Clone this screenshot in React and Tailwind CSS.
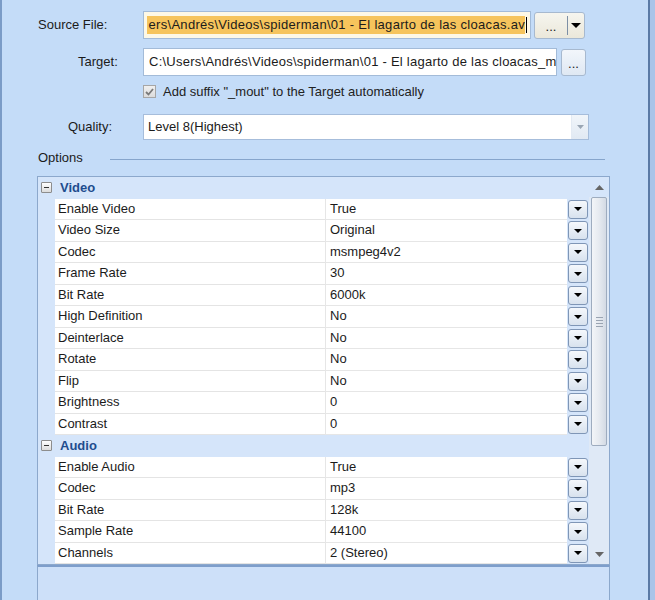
import React from "react";

const Tri = ({ c = "#000", w = 8, h = 4 }) => (
  <svg width={w} height={h} viewBox={`0 0 ${w} ${h}`} className="block">
    <path d={`M0 0H${w}L${w / 2} ${h}Z`} fill={c} />
  </svg>
);
const TriUp = ({ c = "#666", w = 9, h = 5 }) => (
  <svg width={w} height={h} viewBox={`0 0 ${w} ${h}`} className="block">
    <path d={`M0 ${h}H${w}L${w / 2} 0Z`} fill={c} />
  </svg>
);

const video = [
  ["Enable Video", "True"],
  ["Video Size", "Original"],
  ["Codec", "msmpeg4v2"],
  ["Frame Rate", "30"],
  ["Bit Rate", "6000k"],
  ["High Definition", "No"],
  ["Deinterlace", "No"],
  ["Rotate", "No"],
  ["Flip", "No"],
  ["Brightness", "0"],
  ["Contrast", "0"],
];
const audio = [
  ["Enable Audio", "True"],
  ["Codec", "mp3"],
  ["Bit Rate", "128k"],
  ["Sample Rate", "44100"],
  ["Channels", "2 (Stereo)"],
];

function Category({ name }) {
  return (
    <div className="flex items-center h-[21.5px] bg-[#d5e5fa]">
      <div className="w-[17px] flex items-center justify-center">
        <div className="w-[11px] h-[11px] border border-[#8d8d8d] bg-gradient-to-b from-white to-[#dcdcdc] flex items-center justify-center rounded-[1px]">
          <div className="w-[5px] h-px bg-[#333]" />
        </div>
      </div>
      <div className="pl-[5px] font-bold text-[#1f4d8e]">{name}</div>
    </div>
  );
}

function Row({ name, value }) {
  return (
    <div className="flex h-[21.5px] bg-[#d5e5fa]">
      <div className="w-[17px]" />
      <div className="w-[270px] bg-white border-b border-[#e4e4e4] pl-[3px] leading-[20.5px] whitespace-nowrap">
        {name}
      </div>
      <div className="flex-1 bg-white border-b border-l border-[#e6e6e6] pl-[4px] leading-[20.5px] whitespace-nowrap">
        {value}
      </div>
      <div className="w-[22px] flex items-center pl-[1px]">
        <div className="w-[20px] h-[19px] rounded-[3px] border border-[#7f96b6] bg-gradient-to-b from-[#f5f8fc] to-[#d8e2ee] flex items-center justify-center">
          <Tri w={8} h={4} />
        </div>
      </div>
    </div>
  );
}

export default function App() {
  return (
    <div className="flex w-[655px] h-[600px] overflow-hidden bg-[#c4dcf8] font-['Liberation_Sans',Arial,sans-serif] text-[13px] text-[#1b1b1b]">
      <div className="w-[2px] bg-[#7b9cc7]" />
      <div className="flex-1 flex flex-col">
        {/* Source File */}
        <div className="mt-[11px] h-[28px] flex items-center">
          <div className="w-[141px] pl-[36px]">Source File:</div>
          <div className="w-[388px] h-[28px] border border-[#a3bbd8] bg-[#fdf8e6] flex items-center overflow-hidden px-[3px]">
            <div className="flex-1 flex justify-end overflow-hidden whitespace-nowrap bg-[#f6c45c] leading-[18px] tracking-[0.3px]">
              <span>ers\Andrés\Videos\spiderman\01 - El lagarto de las cloacas.av</span>
            </div>
            <div className="w-px h-[16px] bg-black ml-[1px]" />
          </div>
          <div className="ml-[3px] w-[51px] h-[27px] rounded-[3px] border border-[#a7b9cf] bg-gradient-to-b from-[#f6f5ef] to-[#ebe8da] flex">
            <div className="w-[32px] flex items-center justify-center text-[13px] leading-none pt-[3px]">...</div>
            <div className="w-px my-[3px] bg-[#7d8fa5]" />
            <div className="flex-1 flex items-center justify-center">
              <Tri w={10} h={5} />
            </div>
          </div>
        </div>

        {/* Target */}
        <div className="mt-[9px] h-[28px] flex items-center">
          <div className="w-[141px] pl-[76px]">Target:</div>
          <div className="w-[414px] h-[28px] border border-[#a3bbd8] bg-white flex items-center overflow-hidden pl-[5px] whitespace-nowrap tracking-[0.25px]">
            C:\Users\Andrés\Videos\spiderman\01 - El lagarto de las cloacas_m
          </div>
          <div className="ml-[4px] w-[25px] h-[27px] rounded-[3px] border border-[#a7b9cf] bg-gradient-to-b from-[#f2f6fb] to-[#dfe8f3] flex items-center justify-center leading-none pt-[3px]">
            ...
          </div>
        </div>

        {/* Checkbox */}
        <div className="mt-[9px] h-[13px] flex items-center">
          <div className="w-[141px]" />
          <div className="w-[13px] h-[13px] border border-[#a6a6a6] bg-gradient-to-b from-[#f0f0f0] to-[#dcdcdc] flex items-center justify-center">
            <svg width="9" height="8" viewBox="0 0 9 8" className="block">
              <path d="M1 4L3.5 6.5L8 1" stroke="#7a7a7a" strokeWidth="1.8" fill="none" />
            </svg>
          </div>
          <div className="ml-[7px] text-[#222]">Add suffix "_mout" to the Target automatically</div>
        </div>

        {/* Quality */}
        <div className="mt-[16px] h-[26px] flex items-center">
          <div className="w-[141px] pl-[66px]">Quality:</div>
          <div className="w-[446px] h-[26px] border border-[#a6bddb] bg-white flex">
            <div className="flex-1 pl-[4px] leading-[24px]">Level 8(Highest)</div>
            <div className="w-[17px] bg-gradient-to-b from-[#f1f5fa] to-[#e1e9f3] border-l border-[#e3eaf3] flex items-center justify-center">
              <Tri c="#9aa6b4" w={7} h={4} />
            </div>
          </div>
        </div>

        {/* Options */}
        <div className="mt-[11px] h-[14px] flex items-center">
          <div className="pl-[36px]">Options</div>
          <div className="ml-[27px] w-[495px] h-px bg-[#86a5cc] mt-[3px]" />
        </div>

        {/* Grid */}
        <div className="mt-[11px] ml-[35px] w-[573px] h-[389px] border border-[#8ca8cc] flex bg-[#d5e5fa]">
          <div className="flex-1 flex flex-col">
            <Category name="Video" />
            {video.map(([n, v], i) => (
              <Row key={"v" + i} name={n} value={v} />
            ))}
            <Category name="Audio" />
            {audio.map(([n, v], i) => (
              <Row key={"a" + i} name={n} value={v} />
            ))}
          </div>
          <div className="w-[20px] flex flex-col bg-[#dfe9f6]">
            <div className="h-[20px] flex items-center justify-center bg-[#d5e5fa]">
              <TriUp c="#666" w={9} h={5} />
            </div>
            <div className="h-[249px] mx-[2px] rounded-[2px] border border-[#9eacbf] bg-gradient-to-r from-[#f3f5f8] via-[#e6eaf0] to-[#d3dae4] flex items-center justify-center">
              <div className="flex flex-col gap-[2px]">
                <div className="w-[7px] h-px bg-[#9aa4b2]" />
                <div className="w-[7px] h-px bg-[#9aa4b2]" />
                <div className="w-[7px] h-px bg-[#9aa4b2]" />
                <div className="w-[7px] h-px bg-[#9aa4b2]" />
              </div>
            </div>
            <div className="flex-1" />
            <div className="h-[20px] flex items-center justify-center">
              <Tri c="#666" w={9} h={5} />
            </div>
          </div>
        </div>

        {/* Bottom panel */}
        <div className="ml-[35px] w-[573px] flex-1 border-t-2 border-[#7e9ecb] border-x border-x-[#8ca8cc] bg-[#cde0f9]" />
      </div>
      <div className="w-[2px] bg-[#5a7aa6]" />
      <div className="w-[5px] bg-[#a9c4e9]" />
    </div>
  );
}
